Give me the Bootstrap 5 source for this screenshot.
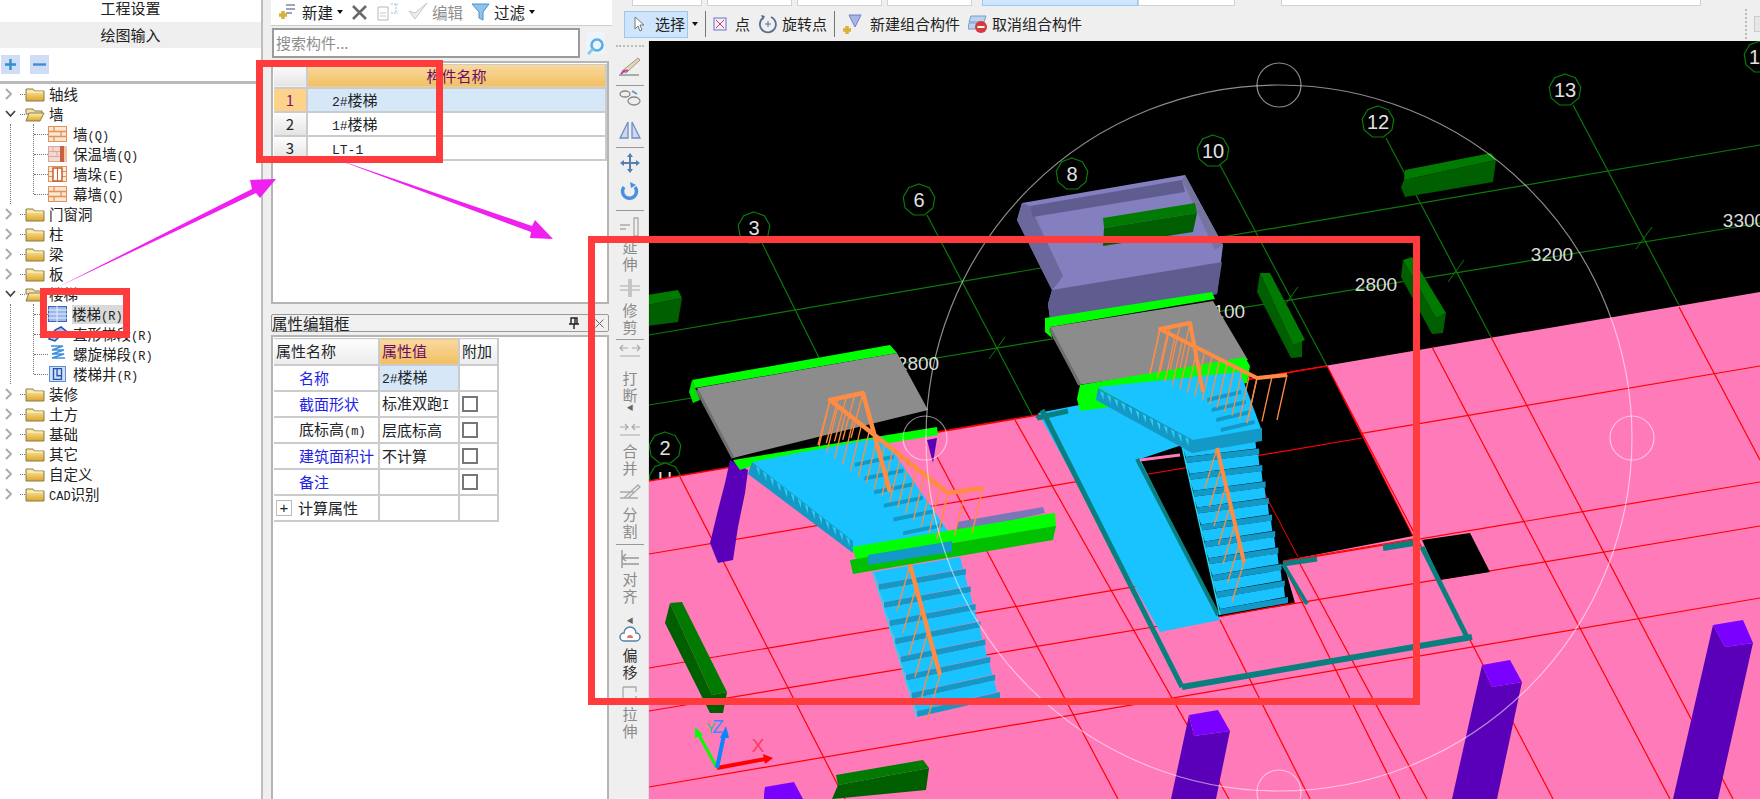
<!DOCTYPE html>
<html lang="zh-CN">
<head>
  <meta charset="UTF-8" />
  <meta name="viewport" content="width=device-width, initial-scale=1" />
  <title>绘图输入</title>
  <link href="https://cdn.jsdelivr.net/npm/bootstrap@5.3.2/dist/css/bootstrap.min.css" rel="stylesheet" />
  <style>
    html, body { height: 100%; overflow: hidden; }
    body { background: #efefef; color: #222; font: 14.5px/1.2 "Noto Sans CJK SC", sans-serif; }
    .ltn { font: 12px "Liberation Mono", monospace; }
    .ltn.big { font-size: 13px; }
    .app-shell { width: 1760px; height: 799px; }

    /* left tree panel */
    .side-pane { width: 263px; background: #fff; border-right: 2px solid #bdbdbd; flex: none; }
    .side-tab { height: 22px; background: #efefef; border: 0; border-bottom: 2px solid #cfcfcf; border-radius: 0; padding: 0 0 4px; font-size: 15px; line-height: 16px; color: #222; }
    .side-tab.second { height: 26px; border-bottom: 0; line-height: 26px; padding: 0; }
    .side-tools { height: 36px; border-bottom: 3px solid #b9b9b9; padding: 0 0 0 1px; gap: 10px; }
    .exp-btn { width: 19px; height: 19px; background: #cfdef6; border: 0; border-radius: 0; padding: 0; }
    .tree-row { height: 20px; white-space: nowrap; }
    .tree-chev { width: 20px; flex: none; padding-left: 5px; }
    .tree-dash { width: 5px; height: 0; border-top: 1px dotted #777; flex: none; }
    .tree-name { margin-left: 4px; }
    .tree-kids { position: relative; }
    .tree-kids::before, .tree-kids::after { content: ""; position: absolute; top: 0; border-left: 1px dotted #777; }
    .tree-kids::before { left: 10px; bottom: 0; }
    .tree-kids::after { left: 33px; height: 70px; }
    .tree-kids .tree-row { padding-left: 34px; }
    .tree-kids .tree-dash { width: 14px; }
    .tree-kids .tree-name { margin-left: 6px; }
    .tree-kids .tree-on { background: #d9d9d9; padding: 0 2px 0 0; margin-left: 5px; }

    /* component list + properties */
    .mid-pane { width: 349px; flex: none; padding-left: 8px; }
    .mid-bar { height: 26px; background: #fff; border-bottom: 1px solid #ccc; padding-left: 7px; font-size: 15.5px; }
    .mid-bar span.off { color: #8f8f8f; }
    .tri-down { width: 0; height: 0; border: 3.5px solid transparent; border-top: 4px solid #111; border-bottom: 0; margin-left: 4px; }
    .find-row { height: 35px; padding: 2px 6px 0 1px; }
    .find-row .form-control { height: 30px; width: 308px; flex: none; border: 2px solid #9b9b9b; border-radius: 0; padding: 0 2px; font-size: 15px; color: #888; box-shadow: none; }
    .find-row .form-control::placeholder { color: #8d8d8d; }
    .find-row .btn { border: 0; padding: 0; margin-left: 6px; background: #eef4fb; border-radius: 0; width: 19px; height: 22px; }
    .grid-frame { height: 244px; background: #fff; border: 2px solid #b5b5b5; padding: 1px 1px; margin-right: 3px; }
    .grid-tbl { width: 333px; table-layout: fixed; --bs-border-color: #cbcbcb; --bs-table-bg: transparent; font-size: 15px; border-width: 0; }
    .grid-tbl td, .grid-tbl th { padding: 0; height: 24px; border-width: 0 2px 2px 0; vertical-align: middle; font-weight: 400; }
    .grid-tbl tr > *:first-child { width: 33px; text-align: center; background: linear-gradient(#fdfdfd, #e4e4e4); }
    .grid-tbl .cell-name { padding-left: 24px; }
    .gold-head { background: linear-gradient(#f9d99e, #f1bf62) !important; color: #6a0a6a !important; text-align: center; }
    .grid-tbl tr.picked > td:first-child { background: #fdd28b; color: #7a1a7a; }
    .grid-tbl tr.picked > td:last-child, .prop-tbl .val-on { background: #d6e8f8; }
    .pane-gap { height: 10px; }
    .prop-title { height: 18px; background: #f0f0f0; border: 1px solid #9a9a9a; border-radius: 2px; font-size: 15.5px; line-height: 15px; padding-right: 4px; margin-right: 3px; }
    .prop-frame { margin-top: 3px; height: 465px; background: #fff; border: 2px solid #b5b5b5; border-bottom: 0; padding: 1px; margin-right: 3px; }
    .prop-tbl { width: 224px; table-layout: fixed; --bs-border-color: #cbcbcb; --bs-table-bg: transparent; font-size: 15px; border-width: 0; }
    .prop-tbl td, .prop-tbl th { height: 26px; padding: 0 0 0 2px; border-width: 0 2px 2px 0; vertical-align: middle; font-weight: 400; white-space: nowrap; overflow: hidden; }
    .prop-tbl th { background: linear-gradient(#fdfdfd, #ececec); }
    .prop-tbl .attr { padding-left: 25px; color: #2222e6; }
    .prop-tbl .attr.plain { color: #222; }
    .prop-tbl .form-check-input { width: 16px; height: 16px; margin: 0; border: 2px solid #777; border-radius: 0; float: none; display: block; }
    .plus-box { width: 16px; height: 16px; border: 1px solid #bbb; font: 15px/13px "Liberation Sans", sans-serif; text-align: center; margin-right: 6px; flex: none; }

    /* right side */
    .top-combos { height: 7px; }
    .combo-stub { height: 6px; background: #fff; border: 1px solid #d2d2d2; border-top: 0; flex: none; }
    .combo-a { width: 70px; margin-left: 20px; margin-right: 5px; }
    .combo-b { width: 85px; margin-right: 5px; }
    .combo-c { width: 156px; margin-left: 5px; background: #cfe5fb; border-color: #9cc8f0; }
    .combo-d { width: 97px; }
    .combo-e { width: 420px; margin-left: 46px; }
    .top-tools { height: 34px; padding-left: 12px; font-size: 15px; }
    .pick-btn { width: 64px; height: 27px; background: #cfe5fb; border: 1px solid #9cc8f0; border-radius: 0; padding: 0 0 0 8px; font-size: 15px; gap: 5px; color: #222; }
    .bar-sep { width: 1px; height: 26px; background: #777; flex: none; margin: 0 7px; }
    .far-grip { width: 3px; height: 30px; border-left: 2px dotted #bbb; margin-right: 6px; }
    .far-stub { width: 6px; height: 16px; background: #e6e6e6; border: 1px solid #ccc; border-right: 0; }
    .work-row { height: 758px; }
    .vt-bar { width: 37px; flex: none; border-right: 1px solid #ddd; font: 15px/17px "Liberation Sans", "Noto Sans CJK SC", sans-serif; color: #8a8a8a; text-align: center; }
    .vt-ico { height: 22px; flex: none; }
    .vt-ch { height: 17px; flex: none; }
    .vt-ch.live { color: #333; }
    .vt-sep { height: 1px; background: #999; margin-left: 4px; margin-right: 4px; flex: none; }
    .vt-grip { height: 9px; border-top: 2px dotted #bbb; margin: 4px 4px 0; flex: none; }
    .vt-tri { height: 8px; flex: none; font-size: 7px; line-height: 8px; color: #666; }
    .s2 { margin-top: 2px; } .s3 { margin-top: 3px; } .s4 { margin-top: 4px; } .s5 { margin-top: 5px; }
    .s6 { margin-top: 6px; } .s7 { margin-top: 7px; } .s8 { margin-top: 8px; } .s9 { margin-top: 9px; } .s10 { margin-top: 10px; } .s12 { margin-top: 12px; }
    .cad-view { width: 1111px; height: 758px; display: block; background: #000; }
    .cad-view text { font-family: "Liberation Sans", sans-serif; }
    .mark-layer { position: absolute; left: 0; top: 0; pointer-events: none; }
  </style>
</head>
<body>
  <svg width="0" height="0" class="position-absolute">
    <defs>
      <linearGradient id="fy" x1="0" y1="0" x2="0" y2="1"><stop offset="0" stop-color="#fdf0b0"/><stop offset="1" stop-color="#dda52a"/></linearGradient>
      <symbol id="i-folder" viewBox="0 0 20 16"><path d="M1 3h7l1.500 2H19v10H1z" fill="url(#fy)" stroke="#8c7a4c"/><path d="M2 6h16" stroke="#fff7cf"/></symbol>
      <symbol id="i-open" viewBox="0 0 20 16"><path d="M1 3h7l1.500 2H17v3H1z" fill="#f3e3a8" stroke="#8c7a4c"/><path d="M1 15 4 7h15l-4 8z" fill="url(#fy)" stroke="#8c7a4c"/></symbol>
      <symbol id="i-brick" viewBox="0 0 19 16"><rect x=".5" y=".5" width="18" height="15" fill="#fbe6d2" stroke="#e2925c"/><path d="M0 5.500h19M0 10.500h19M6 0v5.500M13 5.500v5M6 10.500V16" stroke="#e2925c" stroke-width="1.300"/></symbol>
      <symbol id="i-warm" viewBox="0 0 19 16"><rect x=".5" y=".5" width="18" height="15" fill="#f4d9d2" stroke="#d9a79a"/><path d="M0 5.500h12M0 10.500h12M5 0v5M9 5.500v5" stroke="#dba99c"/><rect x="12" y="0" width="4" height="16" fill="#c8603f"/><path d="M16 0h3v16h-3z" fill="#f2c3a6"/></symbol>
      <symbol id="i-pier" viewBox="0 0 19 16"><rect x=".5" y=".5" width="18" height="15" fill="#fde9d6" stroke="#e2925c"/><path d="M0 5.500h5M0 10.500h5M14 5.500h5M14 10.500h5" stroke="#e2925c"/><rect x="5" y="2" width="9" height="13" fill="#fff" stroke="#c8602f" stroke-width="1.500"/><path d="M9.500 2v13" stroke="#c8602f"/></symbol>
      <symbol id="i-stair" viewBox="0 0 19 16"><rect x=".5" y=".5" width="18" height="15" fill="#9db9ea" stroke="#3b63b8"/><path d="M0 4h19M0 8h19M0 12h19M9 0v16" stroke="#e8f0ff"/></symbol>
      <symbol id="i-flight" viewBox="0 0 19 16"><path d="M1 13 7 4l6-3 5 4-7 6-4 4z" fill="#a9c5ee" stroke="#2353ad" stroke-width="1.500"/></symbol>
      <symbol id="i-spiral" viewBox="0 0 19 20"><path d="M3 2h12L4 6h12L4 10h12L4 14h13" fill="none" stroke="#3f8fdc" stroke-width="1.500"/></symbol>
      <symbol id="i-well" viewBox="0 0 19 18"><rect x=".5" y=".5" width="18" height="17" fill="#cfe0f8" stroke="#4a7fd0"/><path d="M5 3h9v12H5zM9 3v8h5" fill="none" stroke="#2353ad" stroke-width="1.500"/></symbol>
    </defs>
  </svg>

  <div class="app-shell d-flex position-relative">
    <!-- 左侧树 -->
    <aside class="side-pane d-flex flex-column">
      <button class="btn side-tab w-100">工程设置</button>
      <button class="btn side-tab second w-100">绘图输入</button>
      <div class="side-tools d-flex align-items-center">
        <button class="btn exp-btn d-flex align-items-center justify-content-center"><svg width="13" height="13" viewBox="0 0 13 13"><path d="M6.500 1v11M1 6.500h11" stroke="#2f8fd0" stroke-width="2.400"/></svg></button>
        <button class="btn exp-btn d-flex align-items-center justify-content-center"><svg width="13" height="13" viewBox="0 0 13 13"><path d="M0 6.500h13" stroke="#3f8fd0" stroke-width="2.400"/></svg></button>
      </div>
      <div id="treeBox"></div>
    </aside>

    <!-- 构件列表 + 属性 -->
    <section class="mid-pane d-flex flex-column">
      <div class="mid-bar d-flex align-items-center">
        <svg width="20" height="20" viewBox="0 0 20 20"><path d="M8 3h9M8 7h9M8 11h6" stroke="#7b8aa0" stroke-width="1.500"/><path d="M5 9v8M1 13h8" stroke="#d8b13a" stroke-width="3.500"/></svg>
        <span class="ms-1">新建</span><i class="tri-down"></i>
        <svg class="ms-2" width="18" height="15" viewBox="0 0 18 15"><path d="M2 1l13 13M15 1 2 14" stroke="#6a6a6a" stroke-width="2.600"/></svg>
        <svg class="ms-2" width="22" height="18" viewBox="0 0 22 18"><path d="M1 4h10v13H1z" fill="#fff" stroke="#b8b8b8"/><path d="M3 10h6M3 13h6" stroke="#c8c8c8"/><path d="M14 1h7M19 1v9M14 10h7" fill="none" stroke="#9dbbe0" stroke-dasharray="2 1"/></svg>
        <svg class="ms-2" width="21" height="20" viewBox="0 0 21 20"><path d="M2 9l6 8L20 1 8 11z" fill="#eee" stroke="#c8c8c8"/></svg>
        <span class="off ms-1">编辑</span>
        <svg class="ms-2" width="19" height="18" viewBox="0 0 19 18"><path d="M1 1h17l-6 8v8l-4-2V9z" fill="#8cc4ea" stroke="#4f8fc8"/></svg>
        <span class="ms-1">过滤</span><i class="tri-down"></i>
      </div>
      <div class="find-row d-flex align-items-start">
        <input class="form-control" type="text" placeholder="搜索构件..." />
        <button class="btn mt-1" type="button"><svg width="19" height="19" viewBox="0 0 19 19"><circle cx="11" cy="8" r="5.500" fill="none" stroke="#5aaee8" stroke-width="2.600"/><path d="M7 12l-5 5" stroke="#8cc8ee" stroke-width="3"/></svg></button>
      </div>
      <div class="grid-frame">
        <table class="grid-tbl table table-bordered mb-0">
          <thead><tr><th></th><th class="gold-head">构件名称</th></tr></thead>
          <tbody>
            <tr class="picked"><td>1</td><td class="cell-name"><span class="ltn big">2#</span>楼梯</td></tr>
            <tr><td>2</td><td class="cell-name"><span class="ltn big">1#</span>楼梯</td></tr>
            <tr><td>3</td><td class="cell-name"><span class="ltn big">LT-1</span></td></tr>
          </tbody>
        </table>
      </div>
      <div class="pane-gap"></div>
      <div class="prop-title d-flex align-items-center">
        <span class="me-auto">属性编辑框</span>
        <svg width="10" height="12" viewBox="0 0 10 12"><path d="M2 1h6v6H2zM0 7h10M5 7v5M6 1v6" fill="none" stroke="#222" stroke-width="1.400"/></svg>
        <svg class="ms-3" width="9" height="9" viewBox="0 0 9 9"><path d="M.5.5l8 8M8.500.5l-8 8" stroke="#666"/></svg>
      </div>
      <div class="prop-frame">
        <table class="prop-tbl table table-bordered mb-0">
          <colgroup><col width="105"><col width="80"><col width="39"></colgroup>
          <thead><tr><th>属性名称</th><th class="gold-head text-start">属性值</th><th>附加</th></tr></thead>
          <tbody>
            <tr><td class="attr">名称</td><td class="val-on"><span class="ltn big">2#</span>楼梯</td><td></td></tr>
            <tr><td class="attr">截面形状</td><td>标准双跑<span class="ltn">I</span></td><td><input class="form-check-input" type="checkbox" /></td></tr>
            <tr><td class="attr plain">底标高<span class="ltn">(m)</span></td><td>层底标高</td><td><input class="form-check-input" type="checkbox" /></td></tr>
            <tr><td class="attr">建筑面积计</td><td>不计算</td><td><input class="form-check-input" type="checkbox" /></td></tr>
            <tr><td class="attr">备注</td><td></td><td><input class="form-check-input" type="checkbox" /></td></tr>
            <tr><td><div class="d-flex align-items-center"><span class="plus-box">+</span>计算属性</div></td><td></td><td></td></tr>
          </tbody>
        </table>
      </div>
    </section>

    <!-- 工具栏 + 三维视图 -->
    <main class="flex-grow-1 d-flex flex-column">
      <div class="top-combos d-flex">
        <i class="combo-stub combo-a"></i><i class="combo-stub combo-b"></i><i class="combo-stub combo-b"></i><i class="combo-stub combo-b"></i>
        <i class="combo-stub combo-c"></i><i class="combo-stub combo-d"></i><i class="combo-stub combo-e"></i>
      </div>
      <div class="top-tools d-flex align-items-center">
        <button class="btn pick-btn d-flex align-items-center">
          <svg width="13" height="17" viewBox="0 0 13 17"><path d="M2 1v12l3-3 2 5 2-1-2-5h4z" fill="#fff" stroke="#777"/></svg><span class="ms-1">选择</span>
        </button>
        <i class="tri-down"></i>
        <i class="bar-sep"></i>
        <svg width="14" height="14" viewBox="0 0 14 14"><rect x="1" y="1" width="12" height="12" fill="#eef" stroke="#7070c0"/><path d="M3 3l8 8M11 3l-8 8" stroke="#d04040"/></svg>
        <span class="ms-2">点</span>
        <svg class="ms-2" width="20" height="20" viewBox="0 0 20 20"><path d="M5 4a8 8 0 1 0 8-1" fill="none" stroke="#5a6f8f" stroke-width="1.800"/><path d="M10 7v6M7 10h6" stroke="#5a6f8f"/><path d="M3 1l4 1-2 4z" fill="#5a6f8f"/></svg>
        <span class="ms-1">旋转点</span>
        <i class="bar-sep"></i>
        <svg width="20" height="22" viewBox="0 0 20 22"><path d="M7 2h12l-6 12z" fill="#a9b6e8" stroke="#6f7fc0"/><path d="M5 13v8M1 17h8" stroke="#d8b13a" stroke-width="3.500"/></svg>
        <span class="ms-2">新建组合构件</span>
        <svg class="ms-2" width="20" height="20" viewBox="0 0 20 20"><path d="M3 2h15l-2 6H1zM1 9h15l-2 6H0z" fill="#bcd2ee" stroke="#6f9fd0"/><circle cx="13" cy="13" r="6" fill="#d63a3a"/><path d="M9.500 13h7" stroke="#fff" stroke-width="2"/></svg>
        <span class="ms-1">取消组合构件</span>
        <i class="far-grip ms-auto"></i><i class="far-stub"></i>
      </div>
      <div class="work-row d-flex">
        <div class="vt-bar d-flex flex-column">
          <div class="vt-grip"></div>
          <div class="vt-ico s2"><svg width="24" height="20" viewBox="0 0 24 20"><path d="M4 15 20 2l2 2L8 17z" fill="#e8d8a8" stroke="#999"/><path d="M3 18c3-4 5-4 7-3" fill="none" stroke="#c040a0" stroke-width="2"/><path d="M1 19h20" stroke="#666"/></svg></div>
          <div class="vt-sep s7"></div>
          <div class="vt-ico s2"><svg width="24" height="20" viewBox="0 0 24 20"><ellipse cx="7" cy="6" rx="5" ry="3" fill="none" stroke="#888" stroke-width="1.300"/><ellipse cx="16" cy="13" rx="6" ry="4" fill="none" stroke="#888" stroke-width="1.300"/><path d="M14 3l5 3" stroke="#5a8fd0" stroke-width="1.500"/></svg></div>
          <div class="vt-ico s10"><svg width="24" height="20" viewBox="0 0 24 20"><path d="M10 2v16H2zM14 2v16h8z" fill="#cdd8ef" stroke="#6f8fc8" stroke-width="1.300"/></svg></div>
          <div class="vt-sep s5"></div>
          <div class="vt-ico s5"><svg width="24" height="20" viewBox="0 0 24 20"><path d="M12 2v16M4 10h16" stroke="#5a7fa8" stroke-width="2"/><path d="M12 0l3 4H9zM12 20l3-4H9zM2 10l4-3v6zM22 10l-4-3v6z" fill="#4f7fb0"/></svg></div>
          <div class="vt-ico s6"><svg width="24" height="20" viewBox="0 0 24 20"><path d="M6 6a7 7 0 1 0 11 0" fill="none" stroke="#4a8fe0" stroke-width="3.500"/><path d="M12 1l6 3-5 3z" fill="#4a8fe0"/></svg></div>
          <div class="vt-sep s7"></div>
          <div class="vt-ico s6"><svg width="24" height="20" viewBox="0 0 24 20"><path d="M2 8h10M2 12h6M16 1h4v18h-4z" fill="none" stroke="#aaa" stroke-width="1.300"/></svg></div>
          <div class="vt-ch">延</div><div class="vt-ch">伸</div>
          <div class="vt-ico s5"><svg width="24" height="20" viewBox="0 0 24 20"><path d="M2 8h8M14 8h8M2 12h8M14 12h8M11 1v18M13 1v18" stroke="#aaa" stroke-width="1.200"/></svg></div>
          <div class="vt-ch s2">修</div><div class="vt-ch">剪</div>
          <div class="vt-sep s3"></div>
          <div class="vt-ico s2"><svg width="24" height="20" viewBox="0 0 24 20"><path d="M2 6h8M14 6h8M2 14h20M5 3 2 6l3 3M19 3l3 3-3 3" fill="none" stroke="#aaa" stroke-width="1.200"/></svg></div>
          <div class="vt-ch s6">打</div><div class="vt-ch">断</div><div class="vt-tri">◀</div>
          <div class="vt-ico s9"><svg width="24" height="20" viewBox="0 0 24 20"><path d="M2 6h8M14 6h8M2 14h20M7 3l3 3-3 3M17 3l-3 3 3 3" fill="none" stroke="#aaa" stroke-width="1.200"/></svg></div>
          <div class="vt-ch">合</div><div class="vt-ch">并</div>
          <div class="vt-ico s5"><svg width="24" height="20" viewBox="0 0 24 20"><path d="M2 16h18M2 10h14M6 16l14-13 2 2-12 11" fill="none" stroke="#aaa" stroke-width="1.300"/></svg></div>
          <div class="vt-ch s2">分</div><div class="vt-ch">割</div>
          <div class="vt-sep s4"></div>
          <div class="vt-ico s4"><svg width="24" height="20" viewBox="0 0 24 20"><path d="M4 1v18M4 9h17M4 15h17M8 5 4 9l4 3" fill="none" stroke="#999" stroke-width="1.400"/></svg></div>
          <div class="vt-ch">对</div><div class="vt-ch">齐</div><div class="vt-tri s12">◀</div>
          <div class="vt-ico"><svg width="24" height="20" viewBox="0 0 24 20"><path d="M6 16a4 4 0 0 1 0-8 6 6 0 0 1 12 0 4 4 0 0 1 0 8z" fill="#fff" stroke="#5a7fa8" stroke-width="1.500"/><path d="M9 13a3 3 0 0 1 6 0z" fill="#e87070"/></svg></div>
          <div class="vt-ch live">偏</div><div class="vt-ch live">移</div>
          <div class="vt-ico s3"><svg width="24" height="20" viewBox="0 0 24 20"><path d="M5 3h13v5M5 3v14h13v-5" fill="none" stroke="#aaa" stroke-width="1.300"/></svg></div>
          <div class="vt-ch">拉</div><div class="vt-ch">伸</div>
        </div>
        <svg id="cadView" class="cad-view" viewBox="649 41 1111 758"></svg>
      </div>
    </main>

    <!-- 标注 -->
    <svg class="mark-layer" width="1760" height="799" viewBox="0 0 1760 799">
      <g fill="none" stroke="#ff3b3b" stroke-width="7">
        <rect x="43.500" y="291.500" width="83" height="43"/>
        <rect x="259.500" y="63.500" width="180" height="96"/>
        <rect x="591.500" y="239.500" width="825" height="462"/>
      </g>
      <g fill="#f020f0">
        <path d="M58 287 252 189 250 180 276 179 260 198 256 193z"/>
        <path d="M333 158 532 226 535 220 553 239 530 238 531 232z"/>
      </g>
    </svg>
  </div>

  <script src="https://cdn.jsdelivr.net/npm/bootstrap@5.3.2/dist/js/bootstrap.bundle.min.js"></script>
  <script>
    // 树
    const tree = [
      ["轴线"], ["墙", [["i-brick", "墙", "(Q)"], ["i-warm", "保温墙", "(Q)"], ["i-pier", "墙垛", "(E)"], ["i-brick", "幕墙", "(Q)"]]],
      ["门窗洞"], ["柱"], ["梁"], ["板"],
      ["楼梯", [["i-stair", "楼梯", "(R)", true], ["i-flight", "直形梯段", "(R)"], ["i-spiral", "螺旋梯段", "(R)"], ["i-well", "楼梯井", "(R)"]]],
      ["装修"], ["土方"], ["基础"], ["其它"], ["自定义"], ["CAD", "识别"]
    ];
    const chevR = '<svg width="8" height="12" viewBox="0 0 8 12"><path d="M1 1l5 5-5 5" fill="none" stroke="#a8a8a8" stroke-width="1.800"/></svg>';
    const chevD = '<svg width="11" height="8" viewBox="0 0 11 8"><path d="M1 1l4.500 5L10 1" fill="none" stroke="#444" stroke-width="1.800"/></svg>';
    let treeHtml = '<ul class="list-unstyled mb-0">';
    tree.forEach(n => {
      const kids = Array.isArray(n[1]) ? n[1] : null;
      const label = n[0] === "CAD" ? '<span class="ltn">CAD</span>' + n[1] : n[0];
      treeHtml += `<li><div class="tree-row d-flex align-items-center"><span class="tree-chev d-flex">${kids ? chevD : chevR}</span><i class="tree-dash"></i><svg width="20" height="16"><use href="#${kids ? "i-open" : "i-folder"}"/></svg><span class="tree-name">${label}</span></div>`;
      if (kids) {
        treeHtml += '<ul class="list-unstyled mb-0 tree-kids">';
        kids.forEach(k => {
          const h = k[0] === "i-spiral" ? 20 : 16;
          treeHtml += `<li class="tree-row d-flex align-items-center"><i class="tree-dash"></i><svg width="19" height="${h}"><use href="#${k[0]}"/></svg><span class="tree-name ${k[3] ? "tree-on" : ""}">${k[1]}<span class="ltn">${k[2]}</span></span></li>`;
        });
        treeHtml += "</ul>";
      }
      treeHtml += "</li>";
    });
    document.getElementById("treeBox").innerHTML = treeHtml + "</ul>";

    // 三维视图
    let s = "";
    const poly = (p, f) => { s += `<polygon points="${p.join(" ")}" fill="${f}"/>`; };
    const line = (a, b, c, w) => { s += `<line x1="${a[0]}" y1="${a[1]}" x2="${b[0]}" y2="${b[1]}" stroke="${c}" stroke-width="${w}"/>`; };
    const lerp = (a, b, t) => [a[0] + (b[0] - a[0]) * t, a[1] + (b[1] - a[1]) * t];
    const GRN = "#0a7a0a", RED = "#ff0000", BLUE = "#19c3ff", DBLUE = "#1499c6", ORG = "#ff8c42", TEAL = "#0a7f7f";
    const text = (x, y, t, size, c) => { s += `<text x="${x}" y="${y}" font-size="${size}" fill="${c}" text-anchor="middle">${t}</text>`; };

    // 轴网
    line([649, 335], [1760, 145], GRN, 1.2);
    line([649, 405], [1760, 223], GRN, 1.2);
    [[[762, 243], [840, 400]], [[927, 215], [1032, 415]], [[1220, 165], [1327, 366]], [[1386, 138], [1491, 337]], [[1573, 105], [1679, 305]]].forEach(l => line(l[0], l[1], GRN, 1.2));
    const bubble = (x, y, r, t) => {
      const pts = [];
      for (let i = 0; i < 9; i++) pts.push([x + r * Math.sin(i * 0.698), y - r * Math.cos(i * 0.698)].map(v => v.toFixed(1)).join(","));
      s += `<polygon points="${pts.join(" ")}" fill="#000" stroke="${GRN}" stroke-width="1.200"/>`;
      text(x, y + 7, t, 20, "#e2e2e2");
    };
    [[754, 228, "3"], [919, 200, "6"], [1072, 174, "8"], [1213, 151, "10"], [1378, 122, "12"], [1565, 90, "13"], [1760, 57, "14"], [665, 448, "2"], [665, 479, "H"]].forEach(b => bubble(b[0], b[1], 16, b[2]));
    [[997, 348], [1290, 298], [1456, 271], [1644, 238]].forEach(t => { line([t[0] - 8, t[1] + 11], [t[0] + 8, t[1] - 11], GRN, 1); });
    [[918, 370, "2800"], [1224, 318, "3100"], [1376, 291, "2800"], [1552, 261, "3200"], [1744, 227, "3300"]].forEach(t => text(t[0], t[1], t[2], 19, "#dcdcdc"));

    // 楼板
    poly(["649,481", "1760,292", "1760,799", "649,799"], "#ff7ab8");
    const grid = [
      [[649, 554], [1760, 366]], [[649, 668], [1760, 482]], [[649, 711], [1760, 526]], [[649, 787], [1760, 598]],
      [[680, 477], [845, 799]], [[937, 457], [1118, 799]], [[1015, 420], [1229, 799]], [[1220, 620], [1310, 799]],
      [[1283, 564], [1400, 799]], [[1300, 564], [1427, 799]], [[1327, 366], [1553, 799]], [[1432, 347], [1670, 799]],
      [[1491, 337], [1733, 799]], [[1679, 307], [1760, 460]]
    ];
    grid.forEach(l => line(l[0], l[1], RED, 1.2));
    poly(["1035,417", "1327,366", "1413,536", "1283,561", "1295,603", "1218,617", "1137,459"], "#000");
    poly(["1422,540", "1470,533", "1490,572", "1440,580"], "#000");
    line([649, 481], [1327, 366], RED, 1.6);
    line([1327, 366], [1413, 536], RED, 1);
    line([1137, 476], [1362, 438], RED, 1.2);
    line([1265, 494], [1298, 557], RED, 1);
    line([1283, 561], [1413, 539], RED, 1.2);
    line([1218, 617], [1295, 603], RED, 1.2);

    // 暗绿色梁
    const beam = (top, front) => { poly(front, "#005f00"); poly(top, "#007a00"); };
    beam(["648,295", "678,290", "682,298", "648,305"], ["648,305", "682,298", "678,322", "648,326"]);
    beam(["1405,170", "1491,153", "1496,160", "1404,180"], ["1404,180", "1496,160", "1493,182", "1405,197", "1401,187"]);
    beam(["1260,273", "1270,273", "1305,340", "1293,345"], ["1260,273", "1293,345", "1302,340", "1302,357", "1291,358", "1257,292"]);
    beam(["1403,260", "1412,257", "1446,313", "1436,318"], ["1403,260", "1436,318", "1446,313", "1443,333", "1432,334", "1401,277"]);
    beam(["670,603", "682,602", "727,692", "712,695"], ["670,603", "712,695", "727,692", "723,713", "710,713", "665,623"]);
    beam(["836,775", "923,760", "929,768", "838,785"], ["838,785", "929,768", "926,790", "832,799"]);

    // 柱
    const column = (top, body) => { poly(body, "#5a00b8"); poly(top, "#7a00ff"); };
    column(["1482,665", "1510,660", "1522,682", "1492,687"], ["1482,665", "1492,687", "1522,682", "1497,799", "1452,799"]);
    column(["1713,625", "1743,620", "1753,643", "1725,647"], ["1713,625", "1725,647", "1753,643", "1718,799", "1673,799"]);
    column(["1189,715", "1218,710", "1230,731", "1194,736"], ["1189,715", "1194,736", "1230,731", "1216,799", "1171,799"]);
    column(["765,787", "794,782", "803,799", "764,799"], ["765,787", "764,799", "803,799"]);
    poly(["730,460", "748,470", "745,493", "738,527", "733,560", "718,563", "710,543", "718,510", "725,483"], "#5a00b8");
    poly(["927,440", "937,438", "933,463"], "#5a00b8");

    // 楼面与栏板
    poly(["1038,413", "1105,400", "1182,445", "1140,459", "1220,620", "1160,632"], BLUE);
    [[[1042, 410], [1182, 687], 5], [[1182, 687], [1472, 637], 6], [[1422, 547], [1467, 637], 5], [[1137, 459], [1218, 615], 4],
     [[1037, 418], [1068, 411], 5], [[1383, 548], [1420, 542], 6], [[1283, 564], [1317, 559], 5], [[1283, 564], [1307, 604], 4]].forEach(l => line(l[0], l[1], TEAL, l[2]));
    line([1140, 460], [1180, 455], "#ff7ab8", 3);

    // 梯段
    function flight(l0, r0, l1, r1, n) {
      for (let i = 0; i < n; i++) {
        const a = lerp(l0, l1, i / n), b = lerp(r0, r1, i / n), c = lerp(l0, l1, (i + 1) / n), d = lerp(r0, r1, (i + 1) / n);
        poly([a, b, [d[0] - 2, d[1] - 6], [c[0], c[1] - 6]].map(p => p.join(",")), BLUE);
        poly([[c[0], c[1] - 6], [d[0] + 1, d[1] - 6], [d[0] + 1, d[1]], c].map(p => p.join(",")), DBLUE);
      }
      line(l0, l1, "#25d8f0", 1.5);
    }
    function teeth(a, b, n) {
      for (let i = 0; i < n; i++) {
        const p = lerp(a, b, i / n), q = lerp(a, b, (i + .5) / n);
        poly([p.join(","), q.join(","), `${q[0]},${q[1] + 7}`], "#2fd0ee");
      }
    }
    function posts(a, b, n, dx, dy) {
      for (let i = 0; i <= n; i++) {
        const p = lerp(a, b, i / n);
        line(p, [p[0] + dx, p[1] + dy], ORG, 1.3);
      }
    }
    function treads(a, b, n, w) {
      for (let i = 0; i < n; i++) {
        const p = lerp(a, b, (i + .5) / n);
        poly([`${p[0] - w},${p[1] + 8}`, `${p[0] - 1},${p[1]}`, `${p[0] - 1},${p[1] + 4}`, `${p[0] - w},${p[1] + 12}`], DBLUE);
      }
    }

    // 一号楼梯
    poly(["692,380", "890,345", "897,353", "695,388"], "#00ff00");
    poly(["689,392", "692,380", "700,400", "693,403"], "#00e000");
    poly(["697,388", "897,353", "928,410", "733,458"], "#8c8c8c");
    line([697, 390], [733, 458], "#6f6f6f", 3);
    poly(["733,460", "937,427", "938,435", "752,466", "740,470"], "#00ff00");
    poly(["957,522", "1043,507", "1045,513", "957,533"], "#7b76b8");
    flight([873, 572], [960, 557], [917, 717], [999, 698], 8);
    poly(["752,462", "883,437", "952,537", "853,550"], BLUE);
    poly(["752,462", "853,541", "853,553", "748,474"], DBLUE);
    teeth([756, 466], [853, 542], 14);
    treads([890, 448], [948, 530], 6, 40);
    poly(["852,547", "1047,514", "1055,513", "1056,527", "952,543", "857,562"], "#00ff00");
    poly(["850,560", "1056,526", "1053,540", "853,574"], "#00c000");
    poly(["868,555", "952,541", "952,552", "868,565"], DBLUE);
    posts([830, 400], [948, 493], 15, -11, 46);
    posts([863, 393], [830, 400], 4, -12, 45);
    posts([948, 493], [983, 488], 2, -11, 45);
    s += `<polyline points="983,488 948,493 830,400 863,393 890,492" fill="none" stroke="${ORG}" stroke-width="4.500" stroke-linejoin="round"/>`;
    posts([910, 565], [940, 675], 5, -13, 46);
    line([910, 565], [940, 675], ORG, 4.5);

    // 二号楼梯
    poly(["1022,203", "1185,175", "1223,245", "1217,294", "1050,319", "1048,304", "1052,290", "1017,220"], "#8480c0");
    poly(["1022,203", "1030,206", "1063,276", "1058,283", "1052,290", "1017,220"], "#6a689c");
    poly(["1182,180", "1185,175", "1223,245", "1215,250"], "#77739f");
    poly(["1052,290", "1222,262", "1217,294", "1050,319", "1048,304"], "#5f5d90");
    poly(["1030,206", "1182,180", "1185,192", "1033,217"], "#5f5d90");
    poly(["1103,218", "1195,203", "1197,213", "1104,228"], "#007a00");
    poly(["1104,228", "1197,213", "1193,232", "1103,246"], "#005f00");
    poly(["1045,318", "1212,292", "1215,299", "1050,327", "1052,338", "1045,332"], "#00ff00");
    poly(["1050,327", "1213,301", "1248,360", "1078,385"], "#8c8c8c");
    line([1050, 329], [1080, 385], "#6f6f6f", 3);
    poly(["1080,385", "1245,357", "1250,366", "1247,383", "1103,408", "1080,411", "1077,399"], "#00ff00");
    flight([1182, 446], [1255, 438], [1220, 615], [1287, 603], 10);
    poly(["1098,387", "1240,372", "1262,431", "1193,443"], BLUE);
    poly(["1098,388", "1193,440", "1262,428", "1262,441", "1192,453", "1096,400"], DBLUE);
    teeth([1100, 391], [1192, 441], 13);
    treads([1240, 385], [1258, 425], 4, 35);
    posts([1160, 329], [1257, 378], 13, -10, 45);
    posts([1190, 323], [1160, 329], 3, -10, 45);
    posts([1257, 378], [1287, 375], 2, -10, 45);
    s += `<polyline points="1287,375 1257,378 1160,329 1190,323 1203,392" fill="none" stroke="${ORG}" stroke-width="4" stroke-linejoin="round"/>`;
    posts([1217, 448], [1244, 562], 6, -12, 40);
    line([1217, 448], [1244, 562], ORG, 4);

    // 视图球
    s += '<g fill="none" stroke="#fff" stroke-opacity=".55" stroke-width="1.200"><circle cx="1279" cy="438" r="353"/><circle cx="1279" cy="85" r="22"/><circle cx="925" cy="438" r="22"/><circle cx="1632" cy="438" r="22"/><circle cx="1279" cy="792" r="22"/></g>';

    // 坐标轴
    line([717, 768], [765, 759], RED, 4);
    poly(["763,754", "773,758", "765,764"], RED);
    line([717, 768], [699, 735], "#00ff00", 3);
    poly(["695,727", "703,735", "695,738"], "#00ff00");
    line([717, 768], [724, 735], "#0a84ff", 4);
    poly(["726,726", "729,738", "720,738"], "#0a84ff");
    text(758, 752, "X", 19, "#ff3b5b");
    text(718, 733, "Z", 19, "#3b8bff");
    text(711, 733, "Y", 14, "#22cc66");

    document.getElementById("cadView").innerHTML = s;
  </script>
</body>
</html>
